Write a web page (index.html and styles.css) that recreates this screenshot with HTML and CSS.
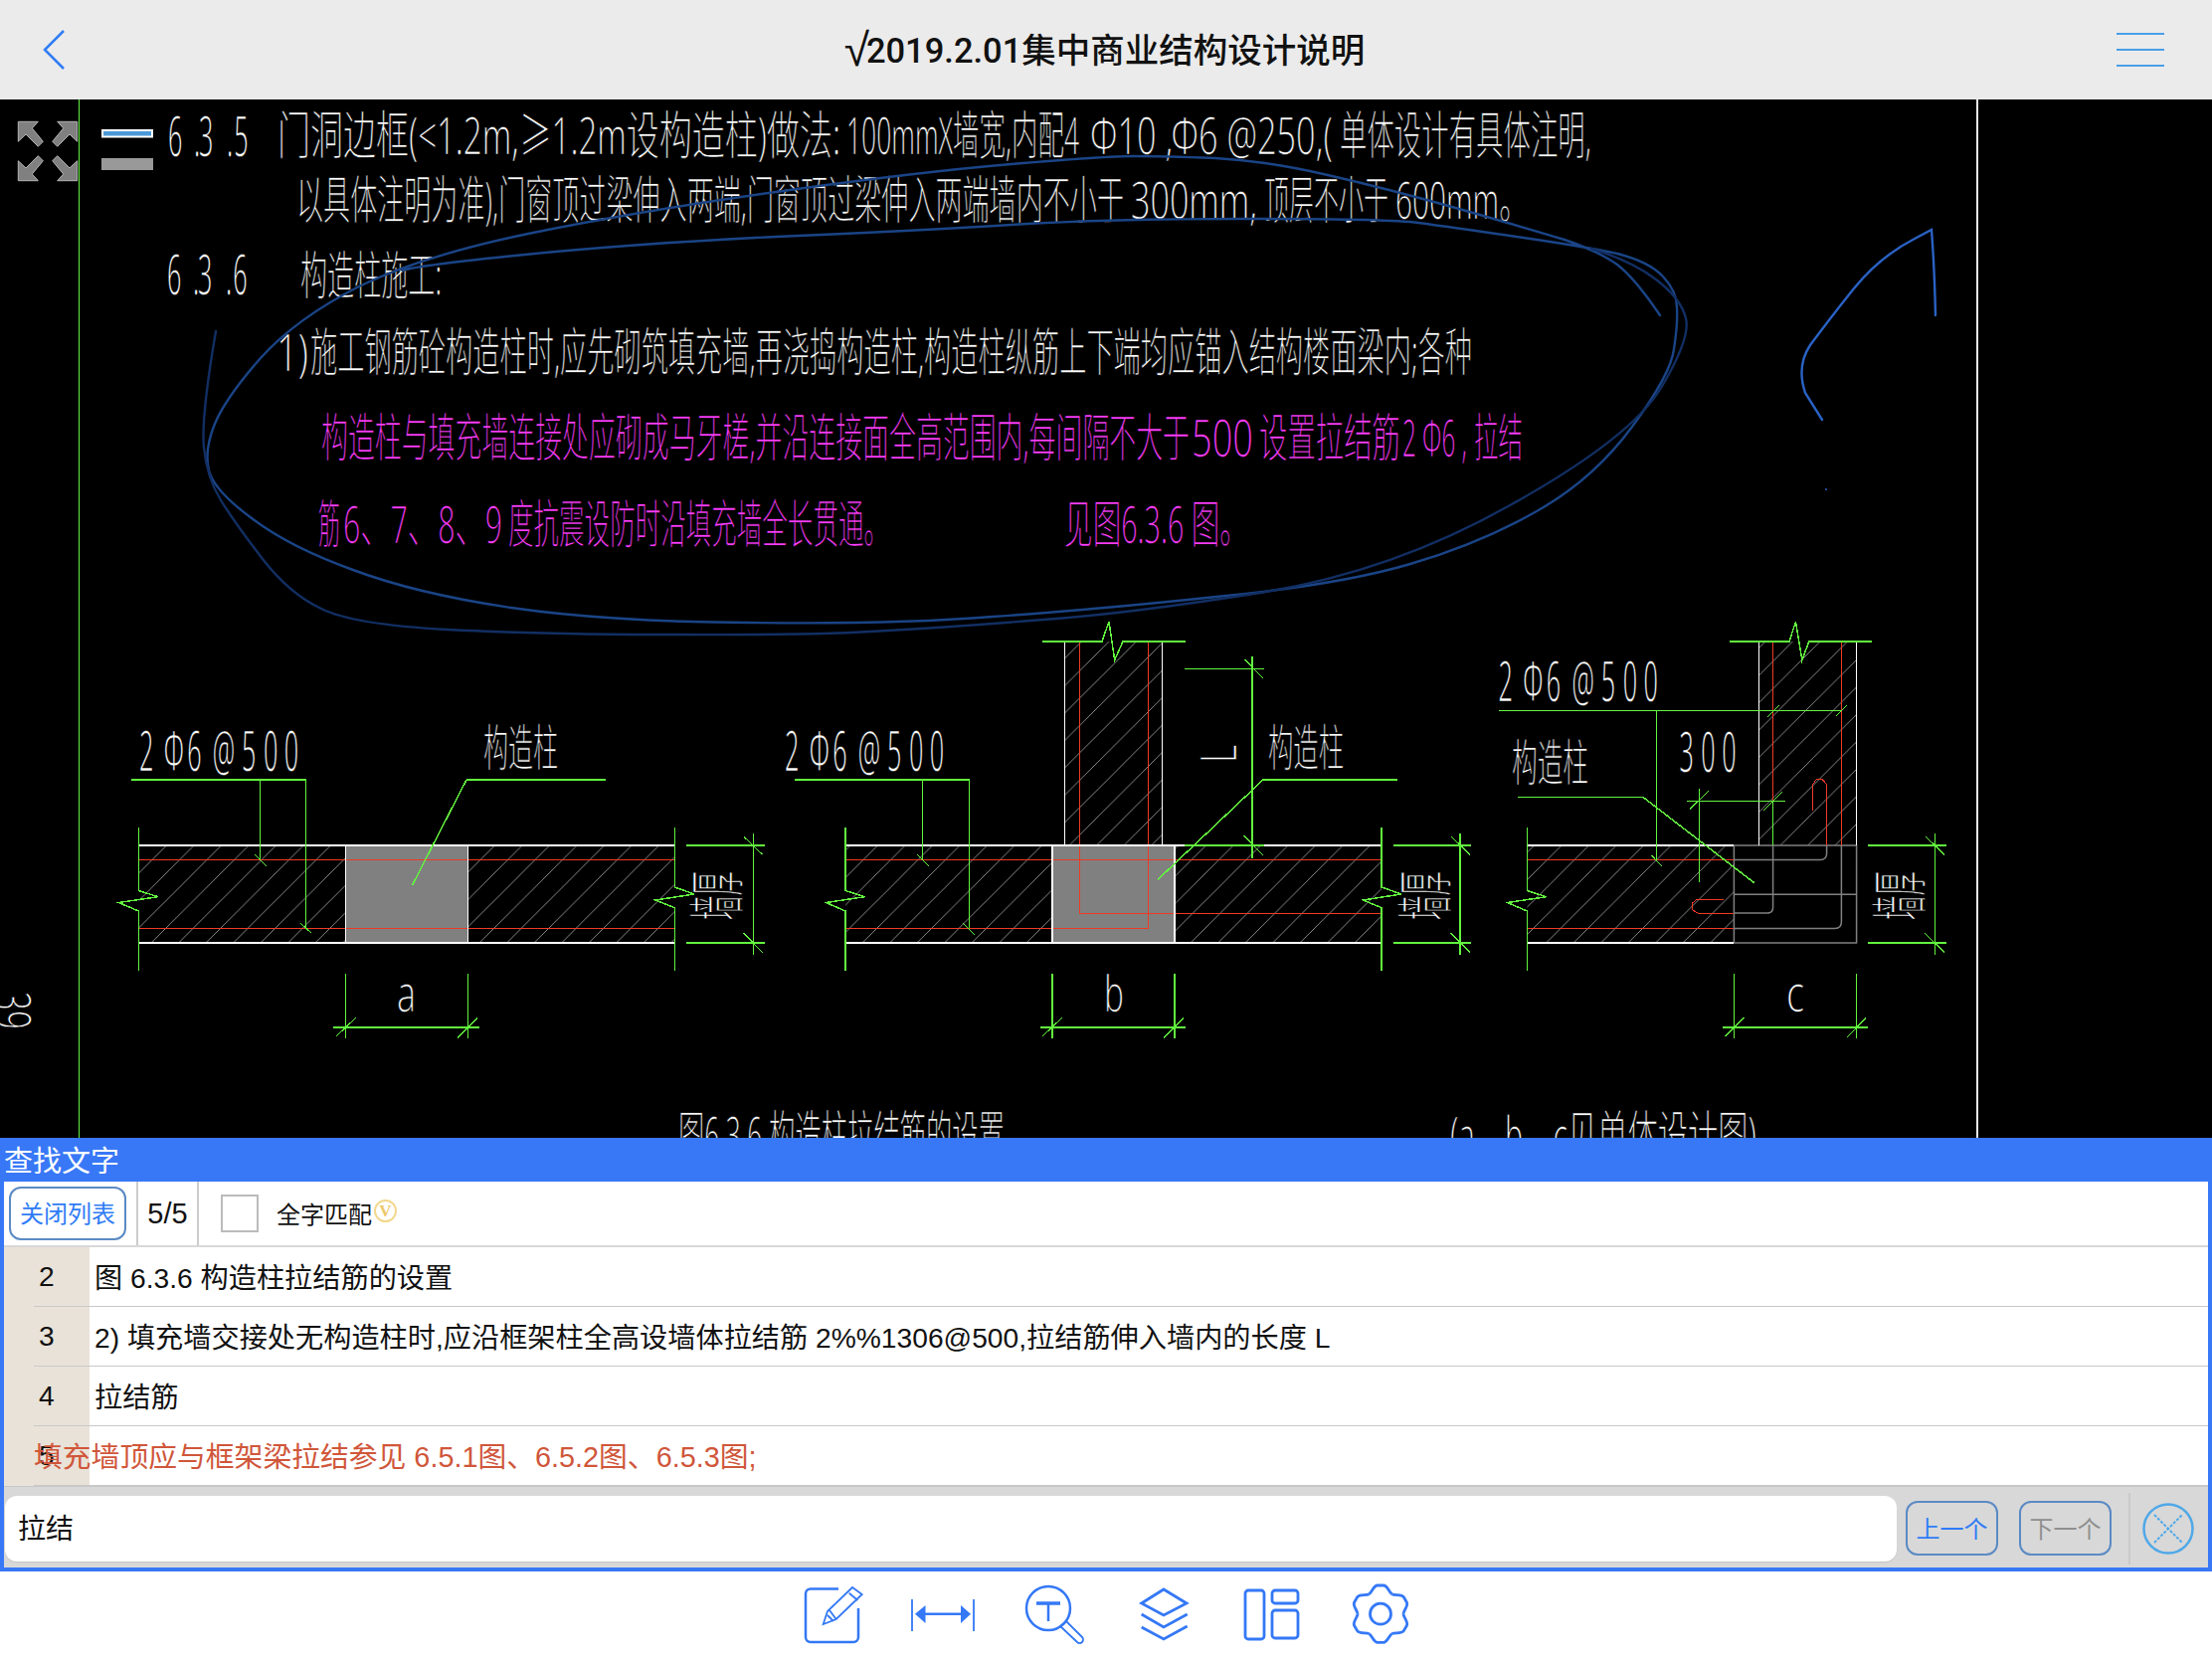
FILE: index.html
```html
<!DOCTYPE html>
<html lang="zh-CN">
<head>
<meta charset="utf-8">
<title>集中商业结构设计说明</title>
<link rel="stylesheet" href="styles.css">
</head>
<body>
<div class="app">
  <header class="topbar">
    <svg class="back" viewBox="0 0 24 42" width="24" height="42"><path d="M22 2 L3 21 L22 40" transform="translate(-1 0)"/></svg>
    <h1 class="doc-title"><span class="root">√</span>2019.2.01集中商业结构设计说明</h1>
    <div class="burger"><i></i><i></i><i></i></div>
  </header>

  <main class="canvas">
    <svg class="cad" viewBox="0 100 2224 1044" width="2224" height="1044">
      <defs>
        <pattern id="hatch" width="27.5" height="27.5" patternUnits="userSpaceOnUse"><path class="hatch-line" d="M-1 28.5 L28.5 -1"/></pattern>
        <path id="arrow" class="arrow" d="M18.3 122.3 H38.3 L32.3 129 L43.3 142.3 L38.3 147.3 L26 135 L18.3 142.3 Z"/>
      </defs>

      <!-- frame lines -->
      <path class="gr" d="M79.5 100 V1144"/>
      <path class="frame" d="M1988 100 V1144"/>

      <!-- text block -->
      <g class="t">
        <text class="num-wide" transform="translate(169 157) scale(.45 1)" x="0 58 69 131 147">6.3.5</text>
        <text x="279" y="155" textLength="566" lengthAdjust="spacingAndGlyphs">门洞边框(&lt;1.2m,≥1.2m设构造柱)做法:</text>
        <text x="851" y="155" textLength="234" lengthAdjust="spacingAndGlyphs">100mmX墙宽,内配4</text>
        <text x="1096" y="155" textLength="244" lengthAdjust="spacingAndGlyphs">Φ10 ,Φ6 @250,(</text>
        <text x="1347" y="155" textLength="253" lengthAdjust="spacingAndGlyphs">单体设计有具体注明,</text>
        <text x="298" y="220" textLength="832" lengthAdjust="spacingAndGlyphs">以具体注明为准),门窗顶过梁伸入两端,门窗顶过梁伸入两端墙内不小于</text>
        <text x="1137" y="220" textLength="127" lengthAdjust="spacingAndGlyphs">300mm,</text>
        <text x="1271" y="220" textLength="125" lengthAdjust="spacingAndGlyphs">顶层不小于</text>
        <text x="1403" y="220" textLength="134" lengthAdjust="spacingAndGlyphs">600mm。</text>
        <text class="num-wide" transform="translate(168 296) scale(.45 1)" x="0 58 69 131 147">6.3.6</text>
        <text x="302" y="296" textLength="142" lengthAdjust="spacingAndGlyphs">构造柱施工:</text>
        <text x="278" y="373" textLength="32" lengthAdjust="spacingAndGlyphs">1)</text>
        <text x="312" y="373" textLength="1168" lengthAdjust="spacingAndGlyphs">施工钢筋砼构造柱时,应先砌筑填充墙,再浇捣构造柱,构造柱纵筋上下端均应锚入结构楼面梁内;各种</text>
        <text x="682" y="1160" textLength="328" lengthAdjust="spacingAndGlyphs">图6.3.6 构造柱拉结筋的设置</text>
        <text x="1458" y="1160" textLength="308" lengthAdjust="spacingAndGlyphs">(a、b、c见单体设计图)</text>
        <text transform="translate(-6 997) rotate(90)" textLength="38" lengthAdjust="spacingAndGlyphs">39</text>
      </g>
      <g class="t t-mag">
        <text x="323" y="459" textLength="873" lengthAdjust="spacingAndGlyphs">构造柱与填充墙连接处应砌成马牙槎,并沿连接面全高范围内,每间隔不大于</text>
        <text x="1198" y="459" textLength="62" lengthAdjust="spacingAndGlyphs">500</text>
        <text x="1266" y="459" textLength="142" lengthAdjust="spacingAndGlyphs">设置拉结筋</text>
        <text x="1410" y="459" textLength="65" lengthAdjust="spacingAndGlyphs">2 Φ6 ,</text>
        <text x="1482" y="459" textLength="49" lengthAdjust="spacingAndGlyphs">拉结</text>
        <text x="320" y="546" textLength="22" lengthAdjust="spacingAndGlyphs">筋</text>
        <text x="345" y="546" textLength="160" lengthAdjust="spacingAndGlyphs">6、7、8、9</text>
        <text x="511" y="546" textLength="383" lengthAdjust="spacingAndGlyphs">度抗震设防时沿填充墙全长贯通。</text>
        <text x="1070" y="546" textLength="185" lengthAdjust="spacingAndGlyphs">见图6.3.6 图。</text>
      </g>

      <!-- detail a -->
      <rect class="hatched" x="139.5" y="850" width="208" height="98"/>
      <rect class="hatched" x="470.5" y="850" width="208" height="98"/>
      <rect class="solid" x="347.5" y="850" width="123" height="98"/>
      <path class="red" d="M139.5 864.5 H678.5 M139.5 933.4 H678.5"/>
      <path class="wh" d="M139.5 850 H678.5 M139.5 948 H678.5 M347.5 850 V948 M470.5 850 V948"/>
      <path class="gr" d="M139.5 832 V895.5 L158.8 901.7 L119.3 907.5 L139.5 916 V975.7 M678.5 832 V892 L698 899 L659 905 L678.5 912.7 V975.7 M132 784 H307.5 V933.4 M261.6 784 V864.5 M469 784 H608.7 M469 784 L414.5 890 M690 850 H769.4 M690 948 H768.5 M757.5 838 V960 M347.5 979 V1044 M470.5 979 V1044 M335 1033 H482"/>
      <path class="gr-thin" d="M256 859 L267.6 870.7 M302 928 L313.5 938.5 M748 841.4 L766.7 859.3 M747.4 938 L766.7 957.5 M338 1042 L358 1023 M460 1043.5 L480 1023.6"/>
      <g class="t t-sm">
        <text class="num-wide" transform="translate(140 775) scale(.45 1)" x="0 55 107 164 229 278 324">2Φ6@500</text>
        <text x="486" y="770" textLength="75" lengthAdjust="spacingAndGlyphs">构造柱</text>
        <text x="399" y="1017" textLength="19" lengthAdjust="spacingAndGlyphs">a</text>
        <text class="wall" transform="translate(742 925) rotate(-90)" textLength="49" lengthAdjust="spacingAndGlyphs">墙厚</text>
      </g>

      <!-- detail b -->
      <rect class="hatched" x="1070.6" y="645" width="97.8" height="205"/>
      <rect class="hatched" x="850" y="850" width="208" height="98"/>
      <rect class="hatched" x="1181" y="850" width="208" height="98"/>
      <rect class="solid" x="1058" y="850" width="123" height="98"/>
      <path class="red" d="M850 864.5 H1389 M850 933.4 H1154 V644.8 M1085.3 644.8 V918 H1389"/>
      <path class="wh" d="M850 850 H1389 M850 948 H1389 M1058 850 V948 M1181 850 V948 M1070.6 644.8 V850 M1168.4 644.8 V850"/>
      <path class="gr" d="M1048 644.8 H1108 L1115 625 L1120.7 663.7 L1129 644.8 H1192 M850 832 V895.5 L869.5 901.7 L830.5 907.5 L850 916 V975.7 M1389 832 V892 L1409 899 L1370.5 905 L1389 912.7 V975.7 M799 784 H974.7 V933.4 M927.4 784 V864.5 M1270 784 H1405 M1270 784 L1164 884.5 M1191 672.3 H1271 M1191 850 H1271 M1259 660 V862.8 M1058 979 V1044 M1181 979 V1044 M1046 1033 H1192 M1400.7 850 H1479 M1400.7 948 H1479 M1468 838 V960"/>
      <path class="gr-thin" d="M922 859 L933.8 870.7 M968 928 L979.7 939.6 M1251.5 663 L1270 682 M1250.6 840 L1270 860 M1459.5 841.4 L1478 859.3 M1458.6 938 L1478 957.5 M1048 1042 L1068 1023 M1170 1043.5 L1190 1023.6"/>
      <g class="t t-sm">
        <text class="num-wide" transform="translate(789 775) scale(.45 1)" x="0 55 107 164 229 278 324">2Φ6@500</text>
        <text x="1275" y="770" textLength="76" lengthAdjust="spacingAndGlyphs">构造柱</text>
        <text x="1110" y="1017" textLength="20" lengthAdjust="spacingAndGlyphs">b</text>
        <text transform="translate(1243 767) rotate(-90)" textLength="18" lengthAdjust="spacingAndGlyphs">L</text>
        <text class="wall" transform="translate(1454 925) rotate(-90)" textLength="49" lengthAdjust="spacingAndGlyphs">墙厚</text>
      </g>

      <!-- detail c -->
      <rect class="hatched" x="1768.5" y="645" width="98.1" height="205"/>
      <rect class="hatched" x="1535.4" y="850" width="208" height="98"/>
      <path class="gy" d="M1743.4 850 H1866.6 V948 H1743.4 Z M1743.4 899.3 H1866.6 M1782.6 850 V912 Q1782.6 918 1777 918 H1743.4 M1851.4 850 V927 Q1851.4 933.4 1845 933.4 H1743.4 M1836.6 850 V858 Q1836.6 864.5 1830 864.5 H1743.4"/>
      <path class="red" d="M1535.4 864.5 H1743.4 M1535.4 933.4 H1743.4 M1782.6 644.8 V850 M1851.4 644.8 V850 M1822.5 814.6 V788.7 L1826.6 783.2 H1832 L1836.6 788.7 V850 M1733 904.4 H1705.6 L1701 908.6 V914.4 L1707 918.2 H1743.4"/>
      <path class="wh" d="M1535.4 850 H1743.4 M1535.4 948 H1743.4 M1768.5 644.8 V850 M1866.6 644.8 V850"/>
      <path class="gr" d="M1739 644.8 H1799 L1805.5 625 L1811.8 663.7 L1818.9 644.8 H1882 M1535.4 832 V895.5 L1554.7 901.7 L1515.5 907.5 L1535.4 916 V975.7 M1506.6 714.4 H1851.4 M1665.3 714.4 V866 M1525.8 801.5 H1652 L1763.7 887.6 M1696 805.3 H1795 M1708.6 793 V887 M1782.6 805.3 V850 M1743.4 979 V1044 M1866.6 979 V1044 M1731.5 1033 H1877.6 M1878 850 H1956.8 M1878 948 H1956.8 M1945.4 838 V960"/>
      <path class="gr-thin" d="M1660.5 860 L1670.5 870.7 M1777.4 720.5 L1789 708.8 M1845.5 720.5 L1857 708.8 M1699 813.5 L1718 795 M1773 815 L1792 796.3 M1734.5 1042 L1753.7 1023 M1856.6 1043.5 L1875.8 1023.6 M1936.5 841.4 L1955 859.3 M1935 938 L1955 957.5"/>
      <g class="t t-sm">
        <text class="num-wide" transform="translate(1506.6 705) scale(.45 1)" x="0 55 107 164 229 278 324">2Φ6@500</text>
        <text x="1520" y="785" textLength="77" lengthAdjust="spacingAndGlyphs">构造柱</text>
        <text class="num-wide" transform="translate(1688.6 775.6) scale(.45 1)" x="0 48 95">300</text>
        <text x="1796" y="1017" textLength="18" lengthAdjust="spacingAndGlyphs">c</text>
        <text class="wall" transform="translate(1931 925) rotate(-90)" textLength="49" lengthAdjust="spacingAndGlyphs">墙厚</text>
      </g>

      <!-- hand drawn notes -->
      <path class="ink" d="M1669 317 Q1644 280 1626 266 Q1608 253 1573 241 Q1537 230 1467 210 Q1396 190 1335 176 Q1275 162 1222 159 Q1169 157 1140 157 Q1112 157 1017 165 Q922 173 780 193 Q638 213 531 235 Q425 257 361 288 Q298 320 262 360 Q227 400 216 426 Q205 453 210 473 Q215 493 253 521 Q291 550 355 573 Q419 597 514 611 Q610 625 753 626 Q897 628 998 620 Q1100 613 1223 600 Q1347 588 1418 567 Q1489 546 1545 514 Q1602 482 1641 429 Q1680 376 1683 351 Q1687 326 1686 309 Q1686 293 1672 278 Q1658 263 1626 255 Q1594 248 1525 238 Q1456 228 1426 224 Q1396 220 1254 220 Q1112 220 1017 226 Q922 232 780 238 Q638 245 528 256 Q418 267 405 272"/>
      <path class="ink ink-dim" d="M217 333 Q202 420 205 450 Q208 480 222 503 Q237 527 264 562 Q291 597 323 612 Q355 628 450 633 Q546 638 683 638 Q820 639 892 634 Q964 630 1049 623 Q1134 617 1267 596 Q1400 575 1520 507 Q1640 440 1670 390 Q1700 340 1695 320 Q1690 300 1665 281 Q1640 262 1600 250"/>
      <path class="ink ink-bright" d="M1946 317 Q1945 270 1942 231 L1925 240 Q1890 258 1864 290 Q1840 320 1820 347 Q1806 368 1815 395 L1832 422"/>
      <circle class="ink-dot" cx="1836" cy="492" r="1"/>

      <!-- viewer controls -->
      <use href="#arrow"/>
      <use href="#arrow" transform="matrix(-1 0 0 1 96 0)"/>
      <use href="#arrow" transform="matrix(1 0 0 -1 0 304)"/>
      <use href="#arrow" transform="matrix(-1 0 0 -1 96 304)"/>
      <rect class="layer-on" x="103" y="131" width="50" height="6.5"/>
      <rect class="layer-off" x="102" y="159" width="52" height="12"/>
    </svg>
  </main>

  <section class="finder">
    <div class="finder-title">查找文字</div>
    <div class="finder-opts">
      <button class="btn btn-close">关闭列表</button>
      <span class="count">5/5</span>
      <span class="check"></span>
      <span class="check-label">全字匹配</span>
      <span class="vip">V</span>
    </div>
    <div class="results">
      <div class="row"><span class="num">2</span><span class="txt">图 6.3.6 构造柱拉结筋的设置</span></div>
      <div class="row"><span class="num">3</span><span class="txt">2) 填充墙交接处无构造柱时,应沿框架柱全高设墙体拉结筋 2%%1306@500,拉结筋伸入墙内的长度 L</span></div>
      <div class="row"><span class="num">4</span><span class="txt">拉结筋</span></div>
      <div class="row row-hit"><span class="num">5</span><span class="txt">填充墙顶应与框架梁拉结参见 6.5.1图、6.5.2图、6.5.3图;</span></div>
    </div>
    <div class="searchbar">
      <div class="input">拉结</div>
      <button class="btn btn-nav">上一个</button>
      <button class="btn btn-nav btn-off">下一个</button>
      <span class="vsep"></span>
      <svg class="x-circle" viewBox="0 0 52 52" width="52" height="52"><circle cx="26" cy="26" r="24.5"/><path d="M12 40 L40 12 M12 12 L40 40"/></svg>
    </div>
  </section>

  <nav class="toolbar">
    <svg class="tool" viewBox="0 0 70 70" width="70" height="70"><path d="M41 9.5 H13 a5 5 0 0 0 -5 5 V58 a5 5 0 0 0 5 5 H56 a5 5 0 0 0 5 -5 V29"/><path class="thin" d="M25.7 45 L30 32 L55 8 L64.7 15 L38.7 40 Z M32 31 L38.7 40 M30 36 L36 42 M51.7 13.7 L60.4 21"/></svg>
    <svg class="tool" viewBox="0 0 70 70" width="70" height="70"><path class="thin" d="M5 20 V52 M67 20 V52"/><path d="M18 34.7 H54"/><path class="fill" d="M8 34.7 L18.5 26 V44 Z M64 34.7 L54 26 V44 Z"/></svg>
    <svg class="tool" viewBox="0 0 70 70" width="70" height="70"><circle cx="32" cy="29" r="22"/><path class="bar" d="M20 24 H44"/><path d="M32 24 V42"/><path class="thin" d="M44 47 L50 42 L66 58 a3.5 3.5 0 0 1 -5 5 Z"/></svg>
    <svg class="tool" viewBox="0 0 70 70" width="70" height="70"><path class="med" d="M38 10 L61 24 L38 36 L15.7 24 Z M15.7 35 L38 48 L61.7 35 M15.7 48 L38 60 L61.7 47"/></svg>
    <svg class="tool" viewBox="0 0 70 70" width="70" height="70"><rect class="med" x="10" y="11" width="19" height="49" rx="3"/><rect class="med" x="37" y="11" width="26" height="13" rx="3"/><rect class="med" x="37" y="31" width="26" height="28" rx="3"/></svg>
    <svg class="tool" viewBox="0 0 70 70" width="70" height="70"><g class="med"><path id="lobe" d="M24.5 14.8 C27.5 13 29 6 33 6 H39 C43 6 44.5 13 47.5 14.8"/><use href="#lobe" transform="rotate(60 36 34.7)"/><use href="#lobe" transform="rotate(120 36 34.7)"/><use href="#lobe" transform="rotate(180 36 34.7)"/><use href="#lobe" transform="rotate(240 36 34.7)"/><use href="#lobe" transform="rotate(300 36 34.7)"/><circle cx="36" cy="34.7" r="10.5"/></g></svg>
  </nav>
</div>
</body>
</html>
```
FILE: styles.css
```css
* { box-sizing: border-box; }
html, body { margin: 0; padding: 0; background: #fff; }
body { font-family: "Liberation Sans", "Noto Sans CJK SC", sans-serif; color: #111; }
.app { width: 2224px; height: 1668px; display: flex; flex-direction: column; overflow: hidden; }

/* top bar */
.topbar { flex: 0 0 100px; background: #ebebeb; display: flex; align-items: center; justify-content: space-between; padding: 0 48px 0 43px; }
.back { fill: none; stroke: #2f7cf6; stroke-width: 2.5; }
.doc-title { margin: 0 0 5px 26px; font-size: 34.5px; font-weight: 500; color: #111; font-family: Roboto, "Noto Sans CJK SC", sans-serif; }
.root { font-size: 46px; font-weight: 400; line-height: 0; vertical-align: -3px; font-family: "Liberation Sans", sans-serif; letter-spacing: -3px; }
.burger { width: 48px; display: flex; flex-direction: column; gap: 14px; }
.burger i { display: block; height: 2px; background: #4a9fe8; }

/* drawing */
.canvas { flex: 0 0 1044px; background: #000; overflow: hidden; }
.cad { display: block; }
.hatch-line { stroke: #8c8c8c; stroke-width: 1; fill: none; shape-rendering: crispEdges; }
.hatched { fill: url(#hatch); }
.solid { fill: #808080; }
.gr { fill: none; stroke: #62f53e; stroke-width: 1.5; shape-rendering: crispEdges; }
.gr-thin { fill: none; stroke: #62f53e; stroke-width: 1; shape-rendering: crispEdges; }
.red { fill: none; stroke: #f03a24; stroke-width: 1; shape-rendering: crispEdges; }
.wh { fill: none; stroke: #fff; stroke-width: 1.5; shape-rendering: crispEdges; }
.gy { fill: none; stroke: #808080; stroke-width: 1.5; }
.frame { fill: none; stroke: #e8e8e8; stroke-width: 1.5; shape-rendering: crispEdges; }
.t text { font-family: "Noto Sans", "Noto Sans CJK SC", sans-serif; font-size: 52px; font-weight: 300; fill: #fff; stroke: #000; stroke-width: .7px; }
.t-mag text { fill: #ff3cff; }
.t-sm text { font-size: 50px; }
.t text.num-wide { font-size: 56px; stroke-width: .5px; }
.t-sm text.wall { font-size: 58px; }
.ink { fill: none; stroke: #1a4486; stroke-width: 2.4; stroke-linecap: round; }
.ink-dim { stroke: #122f63; }
.ink-bright { stroke: #2a62c4; }
.ink-dot { fill: #2a62c4; }
.arrow { fill: #808080; stroke: #b5b5b5; stroke-width: 1; }
.layer-on { fill: #4a9ad8; stroke: #fff; stroke-width: 2; }
.layer-off { fill: #999; }

/* find panel */
.finder { flex: 0 0 436px; display: flex; flex-direction: column; background: #fff; border: 4px solid #3878f6; border-top: 0; }
.finder-title { height: 44px; margin: 0 -4px; padding: 0 4px; background: #3878f6; color: #fff; font-size: 29px; line-height: 42px; font-family: "Noto Sans CJK SC", sans-serif; }
.finder-opts { height: 66px; display: flex; align-items: center; border-bottom: 2px solid #d8d8d8; padding-left: 5px; font-size: 24px; }
.btn { font-family: "Noto Sans CJK SC", sans-serif; font-size: 24px; background: transparent; border: 2px solid #5b8ac4; border-radius: 12px; color: #2f7cf6; padding: 0 0 3px; }
.btn-close { width: 118px; height: 54px; background: #fff; flex: none; }
.count { height: 100%; width: 63px; margin-left: 10px; border-left: 2px solid #ccc; border-right: 2px solid #ccc; display: flex; align-items: center; justify-content: center; font-size: 29px; }
.check { width: 38px; height: 38px; margin-left: 22px; border: 2px solid #bbb; }
.check-label { margin: -2px 0 0 18px; font-size: 24px; font-family: "Noto Sans CJK SC", sans-serif; }
.vip { width: 23px; height: 23px; margin: -6px 0 0 2px; border: 2px solid #f2d88f; border-radius: 50%; color: #edc86a; font: bold 17px/19px "Liberation Serif", serif; text-align: center; }

.results { flex: 0 0 240px; padding-left: 30px; background: linear-gradient(90deg, #e9e2d8 86px, #fff 86px); }
.row { height: 60px; display: flex; align-items: center; border-bottom: 1px solid #c8c8c8; font-size: 28.2px; padding-bottom: 2px; }
.num { flex: 0 0 56px; padding-left: 5px; margin-top: 2px; font-family: "Liberation Sans", sans-serif; }
.txt { padding-left: 5px; font-family: "Liberation Sans", "Noto Sans CJK SC", sans-serif; white-space: nowrap; }
.row-hit .txt { margin-left: -60px; padding-left: 4px; color: #d0563a; font-size: 28.8px; }

.searchbar { flex: 1; display: flex; align-items: flex-start; background: #d8d8d8; border-top: 1px solid #c8c8c8; padding-left: 1px; }
.input { flex: 0 0 1902px; height: 66px; margin-top: 9px; background: #fff; border-radius: 12px; box-shadow: 0 1px 1px #c4c4c4; padding-left: 13px; font-size: 28px; line-height: 62px; font-family: "Noto Sans CJK SC", sans-serif; }
.btn-nav { flex: 0 0 93px; height: 55px; margin: 14px 0 0 9px; }
.btn-off { margin-left: 21px; color: #8f8f8f; }
.vsep { flex: 0 0 2px; height: 72px; margin: 6px 0 0 17px; background: #cacaca; }
.x-circle { margin: 16px 0 0 12px; fill: none; stroke: #4fa8e8; }
.x-circle circle { stroke-width: 2.5; }
.x-circle path { stroke-width: 2; stroke-dasharray: 3 1.5; }

/* toolbar */
.toolbar { flex: 0 0 88px; background: #fff; display: flex; justify-content: center; padding-top: 8px; }
.tool { display: block; margin: 0 20px; fill: none; stroke: #3478f6; stroke-width: 2.5; }
.tool .thin { stroke-width: 1.8; }
.tool .med { stroke-width: 2.8; }
.tool .bar { stroke-width: 3.5; }
.tool .fill { fill: #3478f6; stroke: none; }
```
